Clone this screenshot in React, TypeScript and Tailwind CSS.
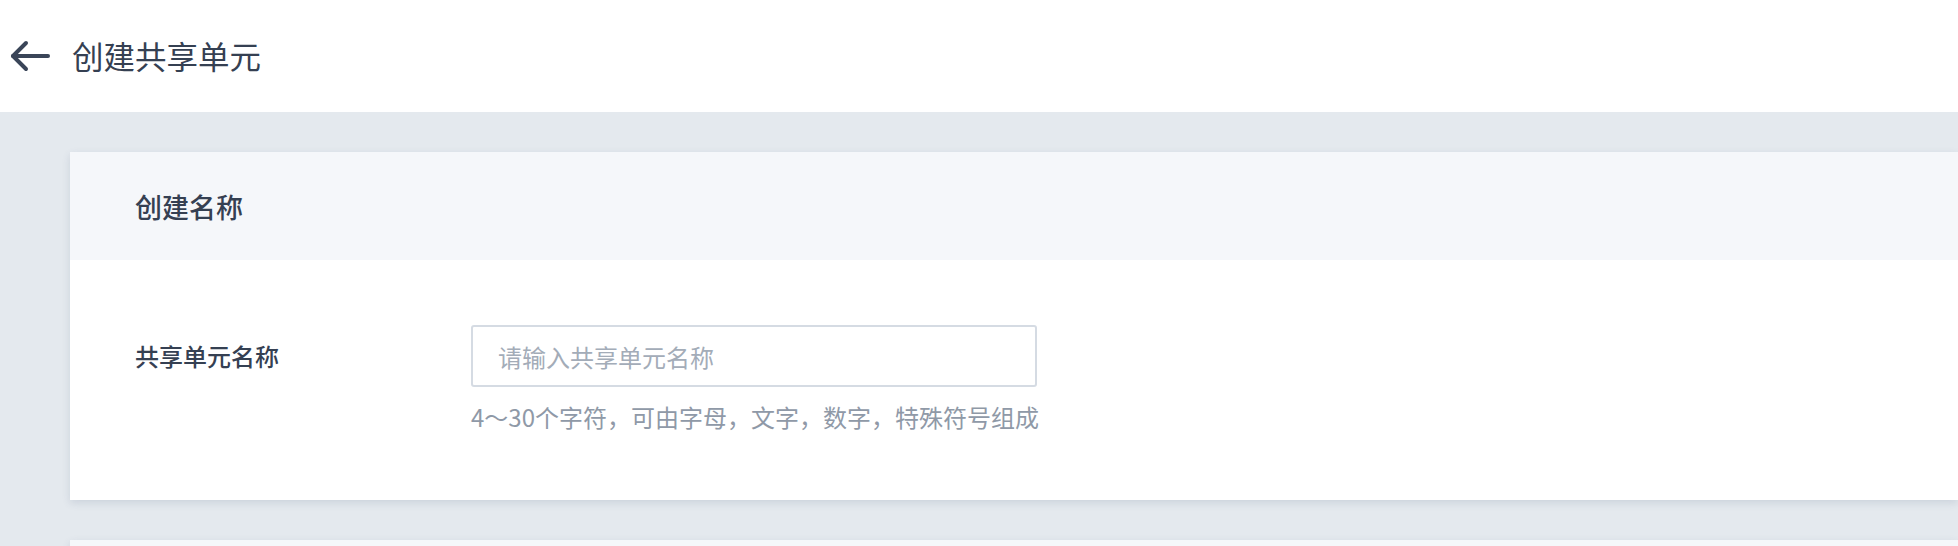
import React from 'react';

/**
 * Create Share Unit
 *
 * Name step of the share unit form
 */

const font = "'Noto Sans CJK SC', 'Noto Sans', sans-serif";

function BackArrow() {
  return (
    <svg width="40" height="32" viewBox="0 0 40 32" fill="none" className="shrink-0">
      <path d="M38 16H3" stroke="#3a4558" strokeWidth="4" strokeLinecap="round" />
      <path d="M16 3 3 16l13 13" stroke="#3a4558" strokeWidth="4" strokeLinecap="round" strokeLinejoin="round" />
    </svg>
  );
}

export default function App() {
  return (
    <div className="min-h-screen bg-[#e4e9ee]" style={{ fontFamily: font }}>
      {/* Top bar */}
      <div className="h-[112px] bg-white flex items-center pl-[10px] gap-[22px]">
        <BackArrow />
        <h1 className="text-[31.5px] leading-none text-[#354052] font-normal">创建共享单元</h1>
      </div>

      <div className="pt-[40px] pl-[70px] flex flex-col gap-[40px]">
        {/* Name card */}
        <div className="bg-white shadow-[0_3px_8px_rgba(60,80,110,0.14)]">
          <div className="h-[108px] bg-[#f5f7fa] flex items-center pl-[65px]">
            <h2 className="text-[27px] leading-none font-medium text-[#354052]">创建名称</h2>
          </div>
          <div className="pt-[65px] pb-[67px] pl-[65px] flex">
            <label className="w-[336px] shrink-0 h-[62px] flex items-center text-[24px] font-medium text-[#354052]">
              共享单元名称
            </label>
            <div className="flex flex-col">
              <input
                type="text"
                placeholder="请输入共享单元名称"
                className="w-[566px] h-[62px] px-[25px] border-2 border-[#d5dbe3] rounded-[3px] text-[24px] text-[#354052] placeholder:text-[#a3acb8] focus:outline-none"
              />
              <p className="mt-[14px] text-[24px] leading-[32px] text-[#8f99a7]">
                4～30个字符，可由字母，文字，数字，特殊符号组成
              </p>
            </div>
          </div>
        </div>

        {/* Next card (cut off) */}
        <div className="bg-white shadow-[0_3px_8px_rgba(60,80,110,0.14)]">
          <div className="h-[108px] bg-[#f5f7fa]" />
        </div>
      </div>
    </div>
  );
}
